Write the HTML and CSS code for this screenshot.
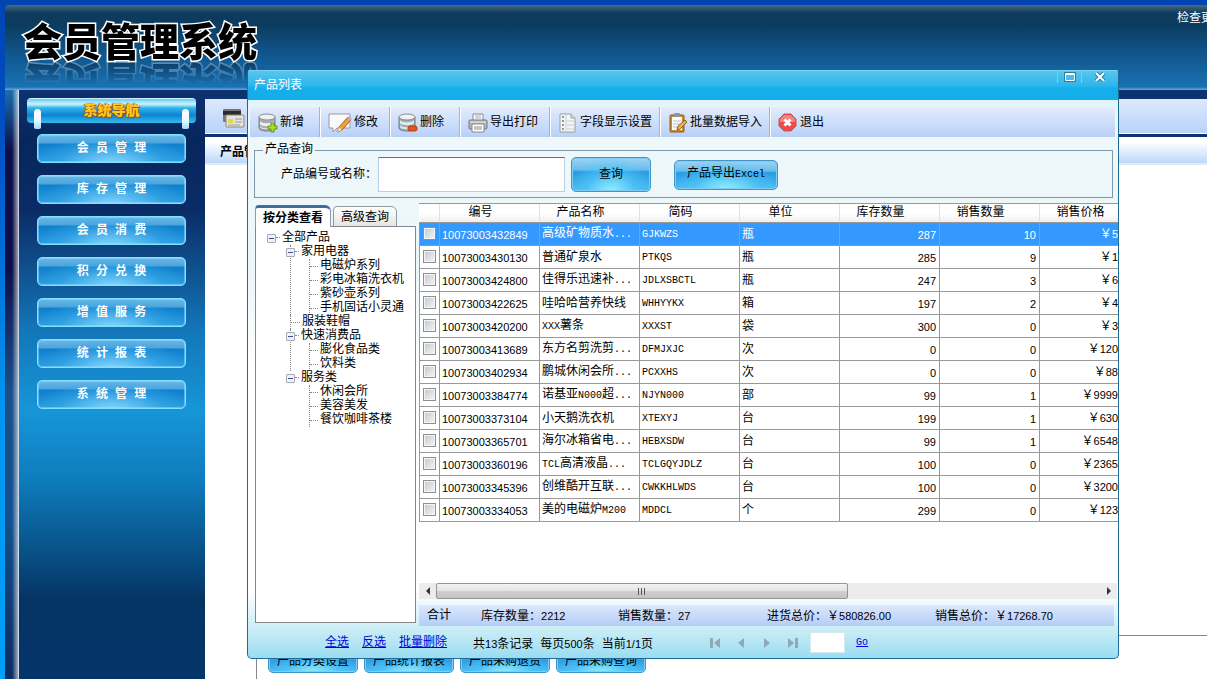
FILE: index.html
```html
<!DOCTYPE html>
<html lang="zh-CN">
<head>
<meta charset="utf-8">
<title>会员管理系统</title>
<link rel="stylesheet" href="styles.css">
</head>
<body>
<div class="app">
  <header class="banner">
    <h1 class="logo">会员管理系统</h1>
    <a class="update" href="#">检查更新</a>
  </header>
  <div class="shell">
    <nav class="sidebar">
      <h2 class="nav-title"><span>系统导航</span></h2>
      <button class="nav-btn" type="button">会 员 管 理</button>
      <button class="nav-btn" type="button">库 存 管 理</button>
      <button class="nav-btn" type="button">会 员 消 费</button>
      <button class="nav-btn" type="button">积 分 兑 换</button>
      <button class="nav-btn" type="button">增 值 服 务</button>
      <button class="nav-btn" type="button">统 计 报 表</button>
      <button class="nav-btn" type="button">系 统 管 理</button>
    </nav>
    <main class="main">
      <div class="main-tools">
        <svg width="24" height="20" viewBox="0 0 24 20"><rect x="1" y="1" width="18" height="13" rx="1" fill="#777"/><rect x="1" y="3" width="18" height="4" fill="#2b2b2b"/><rect x="4" y="7" width="18" height="12" rx="1" fill="#e4e4dc" stroke="#8a8a84"/><rect x="6" y="11" width="5" height="4" fill="#e3d54a"/><path d="M13 11h7M13 14h7M6 17h12" stroke="#999"/></svg>
      </div>
      <div class="main-title">产品管理</div>
      <div class="main-body">
        <div class="main-group">
          <button class="glass small" type="button">产品分类设置</button>
          <button class="glass small" type="button">产品统计报表</button>
          <button class="glass small" type="button">产品采购退货</button>
          <button class="glass small" type="button">产品采购查询</button>
        </div>
      </div>
    </main>
  </div>
</div>

<section class="window">
  <div class="titlebar">
    <span class="title">产品列表</span>
    <button class="winbtn" type="button" aria-label="最大化"><svg width="12" height="10" viewBox="0 0 12 10"><path d="M1 1h10v8H1z" fill="none" stroke="#2b7fa6" stroke-width="2"/><path d="M1.500 1.500h9v7h-9zM1 2.500h10" fill="none" stroke="#fff"/></svg></button>
    <button class="winbtn" type="button" aria-label="关闭"><svg width="12" height="10" viewBox="0 0 12 10"><path d="M2 1l8 8M10 1l-8 8" stroke="#2b7fa6" stroke-width="4"/><path d="M2 1l8 8M10 1l-8 8" stroke="#fff" stroke-width="2"/></svg></button>
  </div>

  <div class="toolbar">
    <button class="tool" type="button"><svg width="20" height="20" viewBox="0 0 20 20"><path d="M1 4v11c0 4 16 4 16 0V4" fill="#a9adb0" stroke="#777b80"/><path d="M2 8c1 3 13 3 14 0v3c-1 3-13 3-14 0z" fill="#eef0f2"/><path d="M2 13c1 3 13 3 14 0v1c-1 3-13 3-14 0z" fill="#e4e6e8"/><ellipse cx="9" cy="4" rx="8" ry="3" fill="#f0f1f2" stroke="#8b8f94"/><path d="M13 10h3v3h3v3h-3v3h-3v-3h-3v-3h3z" fill="#a8e02a" stroke="#5c9a12"/></svg>新增</button>
    <button class="tool" type="button"><svg width="24" height="20" viewBox="0 0 24 20"><path d="M1 1h21v14H9l-4 4v-4H1z" fill="#fafafa" stroke="#999"/><path d="M9 19l2-5L20 4l3 3-9 10z" fill="#e9a13b" stroke="#a1662a"/><path d="M19 5l2-2 3 3-2 2z" fill="#c7a3d8"/><path d="M9 19l2-5 3 3z" fill="#f2dcb8"/></svg>修改</button>
    <button class="tool" type="button"><svg width="20" height="20" viewBox="0 0 20 20"><path d="M1 4v11c0 4 16 4 16 0V4" fill="#a6a9ab" stroke="#777b80"/><path d="M2 7c1 3 13 3 14 0v3c-1 3-13 3-14 0z" fill="#d7edf5"/><path d="M2 12c1 3 13 3 14 0v2c-1 3-13 3-14 0z" fill="#d7edf5"/><ellipse cx="9" cy="4" rx="8" ry="3" fill="#f0f1f2" stroke="#8b8f94"/><rect x="10" y="13" width="9" height="5" rx="2" fill="#e0561b" stroke="#b23d0c"/></svg>删除</button>
    <button class="tool print" type="button"><svg width="20" height="20" viewBox="0 0 20 20"><path d="M5 1h10v7H5z" fill="#fff" stroke="#888"/><path d="M7 3h6M7 5h6" stroke="#aaa"/><rect x="1" y="7" width="18" height="9" rx="1" fill="#b4b7bb" stroke="#74787e"/><path d="M2 9h16" stroke="#e8eaec"/><path d="M4 11h12v8H4z" fill="#fff" stroke="#888"/><path d="M6 14h8M6 16h8" stroke="#888"/></svg>导出打印</button>
    <button class="tool" type="button"><svg width="20" height="20" viewBox="0 0 20 20"><path d="M2 1h11l4 4v14H2z" fill="#f4f5f6" stroke="#9a9da0"/><path d="M13 1v4h4" fill="#ddd" stroke="#9a9da0"/><path d="M4 4h3M4 8h3M4 12h3M4 16h3" stroke="#8d99a4" stroke-width="2" stroke-dasharray="2 1"/><path d="M8 2v17M9 8h7M9 12h7M9 16h7" stroke="#c9cdd2"/></svg>字段显示设置</button>
    <button class="tool" type="button"><svg width="20" height="20" viewBox="0 0 20 20"><rect x="2" y="2" width="14" height="17" rx="1" fill="#c98a35" stroke="#8f5b1d"/><path d="M4 4h10v13H4z" fill="#fdfdf8"/><rect x="6" y="0" width="6" height="4" rx="1" fill="#8f969c"/><path d="M5 8h8M5 11h7M5 14h5" stroke="#b9bec4"/><path d="M9 17l1-4 7-6 2 2-7 7z" fill="#efb04c" stroke="#93601f"/></svg>批量数据导入</button>
    <button class="tool exit" type="button"><svg width="20" height="20" viewBox="0 0 20 20"><path d="M6 1h7l5 5v7l-5 5H6l-5-5V6z" fill="#ea4d4b" stroke="#d84a48" stroke-linejoin="round"/><path d="M6 2h7l4 4v3H2V6z" fill="#f4837d"/><path d="M6.500 6.500l6 6M12.500 6.500l-6 6" stroke="#fff" stroke-width="3"/></svg>退出</button>
  </div>

  <fieldset class="query">
    <legend>产品查询</legend>
    <label for="keyword">产品编号或名称：</label>
    <input id="keyword" class="keyword" type="text">
    <button class="glass search" type="button">查询</button>
    <button class="glass export" type="button">产品导出<span class="n">Excel</span></button>
  </fieldset>

  <div class="work">
    <aside class="side">
      <div class="tabs">
        <button class="tab active" type="button">按分类查看</button>
        <button class="tab" type="button">高级查询</button>
      </div>
      <div class="tree">
        <div class="node root"><button class="toggle" type="button" aria-label="折叠"></button><span>全部产品</span></div>
        <ul class="level1">
          <li><div class="node"><button class="toggle" type="button" aria-label="折叠"></button><span>家用电器</span></div>
            <ul class="level2"><li>电磁炉系列</li><li>彩电冰箱洗衣机</li><li>紫砂壶系列</li><li>手机固话小灵通</li></ul></li>
          <li><div class="node leaf"><span>服装鞋帽</span></div></li>
          <li><div class="node"><button class="toggle" type="button" aria-label="折叠"></button><span>快速消费品</span></div>
            <ul class="level2"><li>膨化食品类</li><li>饮料类</li></ul></li>
          <li><div class="node"><button class="toggle" type="button" aria-label="折叠"></button><span>服务类</span></div>
            <ul class="level2"><li>休闲会所</li><li>美容美发</li><li>餐饮咖啡茶楼</li></ul></li>
        </ul>
      </div>
    </aside>

    <div class="data">
      <div class="grid-wrap">
        <table class="grid">
          <colgroup><col class="c-check"><col><col><col><col><col><col><col></colgroup>
          <thead><tr><th></th><th>编号</th><th>产品名称</th><th>简码</th><th>单位</th><th>库存数量</th><th>销售数量</th><th>销售价格</th></tr></thead>
          <tbody>
            <tr class="selected"><td><input type="checkbox" aria-label="选择"></td><td class="n">10073003432849</td><td>高级矿物质水<span class="n">...</span></td><td class="n">GJKWZS</td><td>瓶</td><td class="n r">287</td><td class="n r">10</td><td class="p">￥<span class="n">5</span></td></tr>
            <tr><td><input type="checkbox" aria-label="选择"></td><td class="n">10073003430130</td><td>普通矿泉水</td><td class="n">PTKQS</td><td>瓶</td><td class="n r">285</td><td class="n r">9</td><td class="p">￥<span class="n">1</span></td></tr>
            <tr><td><input type="checkbox" aria-label="选择"></td><td class="n">10073003424800</td><td>佳得乐迅速补<span class="n">...</span></td><td class="n">JDLXSBCTL</td><td>瓶</td><td class="n r">247</td><td class="n r">3</td><td class="p">￥<span class="n">6</span></td></tr>
            <tr><td><input type="checkbox" aria-label="选择"></td><td class="n">10073003422625</td><td>哇哈哈营养快线</td><td class="n">WHHYYKX</td><td>箱</td><td class="n r">197</td><td class="n r">2</td><td class="p">￥<span class="n">4</span></td></tr>
            <tr><td><input type="checkbox" aria-label="选择"></td><td class="n">10073003420200</td><td><span class="n">XXX</span>薯条</td><td class="n">XXXST</td><td>袋</td><td class="n r">300</td><td class="n r">0</td><td class="p">￥<span class="n">3</span></td></tr>
            <tr><td><input type="checkbox" aria-label="选择"></td><td class="n">10073003413689</td><td>东方名剪洗剪<span class="n">...</span></td><td class="n">DFMJXJC</td><td>次</td><td class="n r">0</td><td class="n r">0</td><td class="p">￥<span class="n">120</span></td></tr>
            <tr><td><input type="checkbox" aria-label="选择"></td><td class="n">10073003402934</td><td>鹏城休闲会所<span class="n">...</span></td><td class="n">PCXXHS</td><td>次</td><td class="n r">0</td><td class="n r">0</td><td class="p">￥<span class="n">88</span></td></tr>
            <tr><td><input type="checkbox" aria-label="选择"></td><td class="n">10073003384774</td><td>诺基亚<span class="n">N000</span>超<span class="n">...</span></td><td class="n">NJYN000</td><td>部</td><td class="n r">99</td><td class="n r">1</td><td class="p">￥<span class="n">9999</span></td></tr>
            <tr><td><input type="checkbox" aria-label="选择"></td><td class="n">10073003373104</td><td>小天鹅洗衣机</td><td class="n">XTEXYJ</td><td>台</td><td class="n r">199</td><td class="n r">1</td><td class="p">￥<span class="n">630</span></td></tr>
            <tr><td><input type="checkbox" aria-label="选择"></td><td class="n">10073003365701</td><td>海尔冰箱省电<span class="n">...</span></td><td class="n">HEBXSDW</td><td>台</td><td class="n r">99</td><td class="n r">1</td><td class="p">￥<span class="n">6548</span></td></tr>
            <tr><td><input type="checkbox" aria-label="选择"></td><td class="n">10073003360196</td><td><span class="n">TCL</span>高清液晶<span class="n">...</span></td><td class="n">TCLGQYJDLZ</td><td>台</td><td class="n r">100</td><td class="n r">0</td><td class="p">￥<span class="n">2365</span></td></tr>
            <tr><td><input type="checkbox" aria-label="选择"></td><td class="n">10073003345396</td><td>创维酷开互联<span class="n">...</span></td><td class="n">CWKKHLWDS</td><td>台</td><td class="n r">100</td><td class="n r">0</td><td class="p">￥<span class="n">3200</span></td></tr>
            <tr><td><input type="checkbox" aria-label="选择"></td><td class="n">10073003334053</td><td>美的电磁炉<span class="n">M200</span></td><td class="n">MDDCL</td><td>个</td><td class="n r">299</td><td class="n r">0</td><td class="p">￥<span class="n">123</span></td></tr>
          </tbody>
        </table>
      </div>
      <div class="scrollbar">
        <button class="arrow" type="button" aria-label="向左"><svg width="6" height="8" viewBox="0 0 6 8"><path d="M5 0v8L1 4z" fill="#333"/></svg></button>
        <div class="track"><div class="thumb"><i></i><i></i><i></i></div></div>
        <button class="arrow" type="button" aria-label="向右"><svg width="6" height="8" viewBox="0 0 6 8"><path d="M1 0v8l4-4z" fill="#333"/></svg></button>
      </div>
      <div class="summary">
        <span>合计</span><span>库存数量：<span class="n">2212</span></span><span>销售数量：<span class="n">27</span></span><span>进货总价：￥<span class="n">580826.00</span></span><span>销售总价：￥<span class="n">17268.70</span></span>
      </div>
    </div>
  </div>

  <footer class="foot">
    <div class="links"><a href="#">全选</a><a href="#">反选</a><a href="#">批量删除</a></div>
    <div class="count"><span>共<span class="n">13</span>条记录</span><span>每页<span class="n">500</span>条</span><span>当前<span class="n">1/1</span>页</span></div>
    <div class="pager">
      <button type="button" aria-label="首页"><svg width="12" height="12" viewBox="0 0 12 12"><path d="M1 1h3v10H1zM11 1v10L5 6z" fill="#8fa9b6"/></svg></button>
      <button type="button" aria-label="上一页"><svg width="12" height="12" viewBox="0 0 12 12"><path d="M9 1v10L3 6z" fill="#8fa9b6"/></svg></button>
      <button type="button" aria-label="下一页"><svg width="12" height="12" viewBox="0 0 12 12"><path d="M3 1v10l6-5z" fill="#8fa9b6"/></svg></button>
      <button type="button" aria-label="末页"><svg width="12" height="12" viewBox="0 0 12 12"><path d="M8 1h3v10H8zM1 1v10l6-5z" fill="#8fa9b6"/></svg></button>
    </div>
    <input class="page-no" type="text" aria-label="页码">
    <a class="n" href="#">Go</a>
  </footer>
</section>
</body>
</html>
```

FILE: styles.css
```css
* { box-sizing: border-box; }
body {
  margin: 0;
  height: 100vh;
  overflow: hidden;
  font: 12px/14px "Liberation Mono", "Noto Sans CJK SC", sans-serif;
  color: #000;
  background: linear-gradient(#0044b4, #0050c4 20%, #0096f0 60%, #00a0f8);
  position: relative;
}
button, input { font: inherit; color: inherit; }
button { padding: 0; border: 0; background: none; white-space: nowrap; }
h1, h2, ul { margin: 0; padding: 0; list-style: none; }
svg { display: block; flex: none; }
a { color: #0000e0; }
.n { font-family: "Liberation Mono", monospace; font-size: 10px; }
.grid td.n:nth-child(2), .grid td.r, .p .n, .summary .n, .count .n {
  font-family: "Liberation Sans", sans-serif;
  font-size: 11px;
}

/* Application behind the window */
.app { height: 100%; padding: 5px 0 0 5px; display: flex; flex-direction: column; }
.banner {
  flex: none;
  height: 85px;
  padding: 7px 0 0 18px;
  display: flex;
  align-items: flex-start;
  background: linear-gradient(#4b6a80, #0e3a5c 8px, #0c3c60 20px, #10578e 50px, #1a71b2 82px, #6cabdc);
  border-top-left-radius: 4px;
  overflow: hidden;
}
.logo {
  flex: 1;
  font: 900 39px/54px "Noto Sans CJK SC", sans-serif;
  -webkit-text-stroke: 3px #fff;
  paint-order: stroke fill;
  -webkit-box-reflect: below -9px linear-gradient(transparent 50%, rgba(255, 255, 255, .4));
}
.update { color: #fff; text-decoration: none; width: 30px; white-space: nowrap; }
.shell {
  flex: 1;
  min-height: 0;
  display: flex;
  padding-left: 14px;
  background:
    linear-gradient(90deg, transparent 7px, rgba(255, 255, 255, .6) 13px, #fff 14px),
    linear-gradient(#1a6fb0, #0b1048 60px, #0b1048 180px, #1c4f88 300px, #14508c 430px, #0c2c60);
}
.sidebar {
  flex: none;
  width: 186px;
  padding: 8px 9px 0 8px;
  display: flex;
  flex-direction: column;
  align-items: center;
  gap: 12px;
  background: linear-gradient(#0d3270, #08265e 50px, #0a2c66 120px, #1376b8 240px, #1696d8 320px, #0e7cbc 390px, #053464 510px, #04356a);
}
.nav-title {
  width: 169px;
  height: 25px;
  margin-bottom: -1px;
  padding: 0 7px;
  display: flex;
  justify-content: space-between;
  align-items: flex-start;
  border-radius: 4px;
  border-top: 1px solid #c8f2ff;
  background: linear-gradient(#5ccdf8, #d0f4ff 5px, #30b4ec 9px, #0c85d0 16px, #39baf0);
  font: 900 14px/20px "Noto Sans CJK SC", sans-serif;
  color: #ffc81e;
  text-shadow: 1px 1px 1px #a04a00, -1px 0 1px #a04a00;
}
.nav-title::before, .nav-title::after {
  content: "";
  width: 7px;
  height: 20px;
  margin-top: 10px;
  border-radius: 4px 4px 2px 2px;
  background: linear-gradient(#fff, #e8f8ff 60%, #9fdcfa);
}
.nav-btn {
  width: 149px;
  height: 29px;
  padding-top: 1px;
  border: 1px solid #7fe0ff;
  border-radius: 5px;
  box-shadow: inset 0 0 0 1px rgba(150, 225, 255, .5);
  background:
    radial-gradient(ellipse at 50% 110%, rgba(140, 220, 255, .95), rgba(60, 170, 235, .5) 50%, transparent 75%),
    linear-gradient(#6cb8e6, #4da4dc 8px, #0d7fcc 9px, #2a9ce0);
  color: #fff;
  font-weight: bold;
}
.main { flex: 1; min-width: 0; display: flex; flex-direction: column; background: #0d3270; padding-top: 9px; }
.main-tools {
  height: 35px;
  flex: none;
  padding: 9px 17px;
  border-bottom: 1px solid #fff;
  background: linear-gradient(#dce9fd, #b9d3f8);
}
.main-title {
  height: 28px;
  flex: none;
  margin-top: 3px;
  padding: 2px 15px 0;
  font-weight: bold;
  line-height: 28px;
  border-bottom: 2px solid #e4eaf2;
  background: linear-gradient(#fff, #fff 20%, #bcd8fa);
}
.main-body { flex: 1; display: flex; align-items: flex-end; padding-left: 51px; background: #fff; }
.main-group {
  flex: 1;
  height: 44px;
  display: flex;
  align-items: flex-start;
  gap: 6px;
  padding: 14px 0 0 11px;
  border: 1px solid #828790;
  border-width: 1px 0 0 1px;
}

/* Glossy blue buttons */
.glass {
  border: 1px solid #3f95c6;
  border-radius: 5px;
  background:
    radial-gradient(ellipse at 50% 110%, rgba(160, 245, 255, .95), rgba(80, 200, 250, .6) 45%, transparent 75%),
    linear-gradient(#9fd4f2, #6bbcec 35%, #2a9be0 42%, #4cbcf4);
  box-shadow: inset 0 0 0 1px #7fcdf2;
}
.glass.small { width: 90px; height: 23px; }
.glass.search { width: 80px; height: 35px; }
.glass.export { width: 104px; height: 30px; margin-left: 17px; }

/* Floating product window */
.window {
  position: absolute;
  top: 70px;
  right: 88px;
  bottom: 20px;
  left: 247px;
  display: flex;
  flex-direction: column;
  border: 1px solid #1d6a94;
  border-top-color: #7ed2f4;
  border-radius: 3px 3px 5px 5px;
  overflow: hidden;
  background: linear-gradient(#c4e8f4, #eef8fb 45px, #edf6f9 200px, #fff 300px, #fff 520px, #c8ecf6 560px, #9adcf2);
}
.titlebar {
  flex: none;
  height: 29px;
  display: flex;
  align-items: flex-start;
  padding: 0 1px 0 6px;
  background: linear-gradient(#56c6ee, #2fb6ec 50%, #14aeea 60%, #14aeea);
  color: #fff;
}
.title { flex: 1; line-height: 30px; }
.winbtn { width: 24px; height: 12px; display: grid; place-items: center; border-left: 1px solid #7bcdec; }
.winbtn + .winbtn { width: 36px; }
.toolbar {
  flex: none;
  height: 30px;
  margin: 7px 3px 0 2px;
  display: flex;
  background: linear-gradient(#e2ecfc, #c9dcfb 60%, #b9d0f6);
}
.tool {
  min-width: 70px;
  display: flex;
  align-items: center;
  gap: 2px;
  padding: 2px 7px 0 8px;
  border-right: 1px solid #aab4c4;
  box-shadow: 1px 0 #fff;
}
.print { min-width: 90px; }
.exit { border: 0; box-shadow: none; }
.query {
  flex: none;
  height: 55px;
  margin: 6px 5px 0 6px;
  padding: 0 0 0 26px;
  display: flex;
  align-items: center;
  gap: 6px;
  border: 1px solid #7d98ac;
}
.query legend { margin-left: -18px; padding: 0 2px; line-height: 14px; }
.query label { width: 91px; white-space: nowrap; }
.keyword { width: 187px; height: 35px; border: 1px solid #b5cfe7; border-top-color: #3d7bad; background: #fff; }

.work { flex: 1; min-height: 0; display: flex; gap: 3px; padding: 5px 0 0 7px; }
.side { flex: none; width: 161px; padding: 2px 0 3px; display: flex; flex-direction: column; }
.tabs { display: flex; align-items: flex-end; gap: 2px; margin-bottom: -1px; }
.tab {
  height: 21px;
  width: 64px;
  padding-top: 2px;
  border: 1px solid #8b9aa5;
  border-radius: 4px 6px 0 0;
  background: linear-gradient(#fff, #e4e4e4);
}
.tab.active { width: 76px; height: 22px; border-top: 3px solid #3c6ea5; border-bottom: 0; background: #fff; font-weight: bold; position: relative; }
.tree { flex: 1; padding: 4px 0 0 11px; border: 1px solid #828790; background: #fff; }
.node, .level2 li { display: flex; align-items: center; height: 14px; white-space: nowrap; }
.toggle {
  flex: none;
  width: 9px;
  height: 9px;
  border: 1px solid #a4aab8;
  border-radius: 1px;
  background: linear-gradient(#3a4f9c, #3a4f9c) center / 5px 1px no-repeat, #f2f2f2;
}
.toggle + span::before, .leaf::before { content: ""; display: inline-block; vertical-align: middle; width: 4px; margin-right: 2px; border-top: 1px dotted #888; }
.leaf::before { width: 9px; }
.level1 { padding-left: 23px; }
.level1 > li { border-left: 1px dotted #888; }
.level1 > li:last-child { border-left-color: transparent; }
.level1 .toggle { margin-left: -5px; }
.level2 { margin-left: 18px; border-left: 1px dotted #888; }
.level2 li::before { content: ""; width: 8px; margin-right: 2px; border-top: 1px dotted #888; }

.data { flex: 1; min-width: 0; display: flex; flex-direction: column; }
.grid-wrap { flex: 1; min-height: 0; overflow: hidden; background: #fff; border-top: 1px solid #999; }
.grid { width: 721px; table-layout: fixed; border-collapse: collapse; }
.c-check { width: 20px; }
.grid th {
  height: 18px;
  padding: 2px 18px 0 0;
  line-height: 15px;
  font-weight: normal;
  border-right: 1px solid #e2e2e2;
  border-bottom: 1px solid #999;
  background: linear-gradient(#fff 50%, #efefef);
}
.grid td { height: 23px; padding: 2px 2px 0; border: 1px solid #999; white-space: nowrap; overflow: hidden; }
.grid td.r { text-align: right; padding-right: 3px; }
.grid td.p { text-align: right; padding-right: 21px; }
.grid td:first-child { padding-top: 0; }
.grid .selected td { background: #3399ff; color: #fff; }
.grid input {
  appearance: none;
  display: block;
  width: 13px;
  height: 13px;
  margin: 0 auto;
  border: 1px solid #8e8f8f;
  outline: 1px solid #f4f4f4;
  outline-offset: -2px;
  background: linear-gradient(135deg, #c2c8ce, #f6f6f6);
}
.scrollbar { flex: none; display: flex; height: 16px; background: #ececec; margin-right: 1px; }
.arrow { width: 17px; display: grid; place-items: center; }
.track { flex: 1; display: flex; }
.thumb {
  width: 62%;
  display: flex;
  align-items: center;
  justify-content: center;
  gap: 2px;
  border: 1px solid #959595;
  border-radius: 2px;
  background: linear-gradient(#f3f3f3, #e4e4e4 48%, #cfcfcf 52%, #c4c4c4);
}
.thumb i { width: 1px; height: 7px; background: #555; }
.summary {
  flex: none;
  height: 21px;
  margin: 6px 4px 0 0;
  padding: 1px 0 0 8px;
  display: grid;
  grid-template-columns: 54px 137px 149px 168px auto;
  align-items: center;
  white-space: nowrap;
  background: linear-gradient(#dce8fc, #b4cdf6);
}
.foot { flex: none; height: 32px; display: flex; align-items: center; padding: 1px 0 0 77px; white-space: nowrap; }
.links, .count { display: flex; gap: 13px; }
.count { gap: 7px; margin-left: 26px; padding-top: 3px; width: 229px; }
.pager { display: flex; gap: 14px; margin-left: 7px; }
.page-no { width: 35px; height: 21px; margin: 0 11px; border: 1px solid #d8e8f0; background: #fff; }
```
